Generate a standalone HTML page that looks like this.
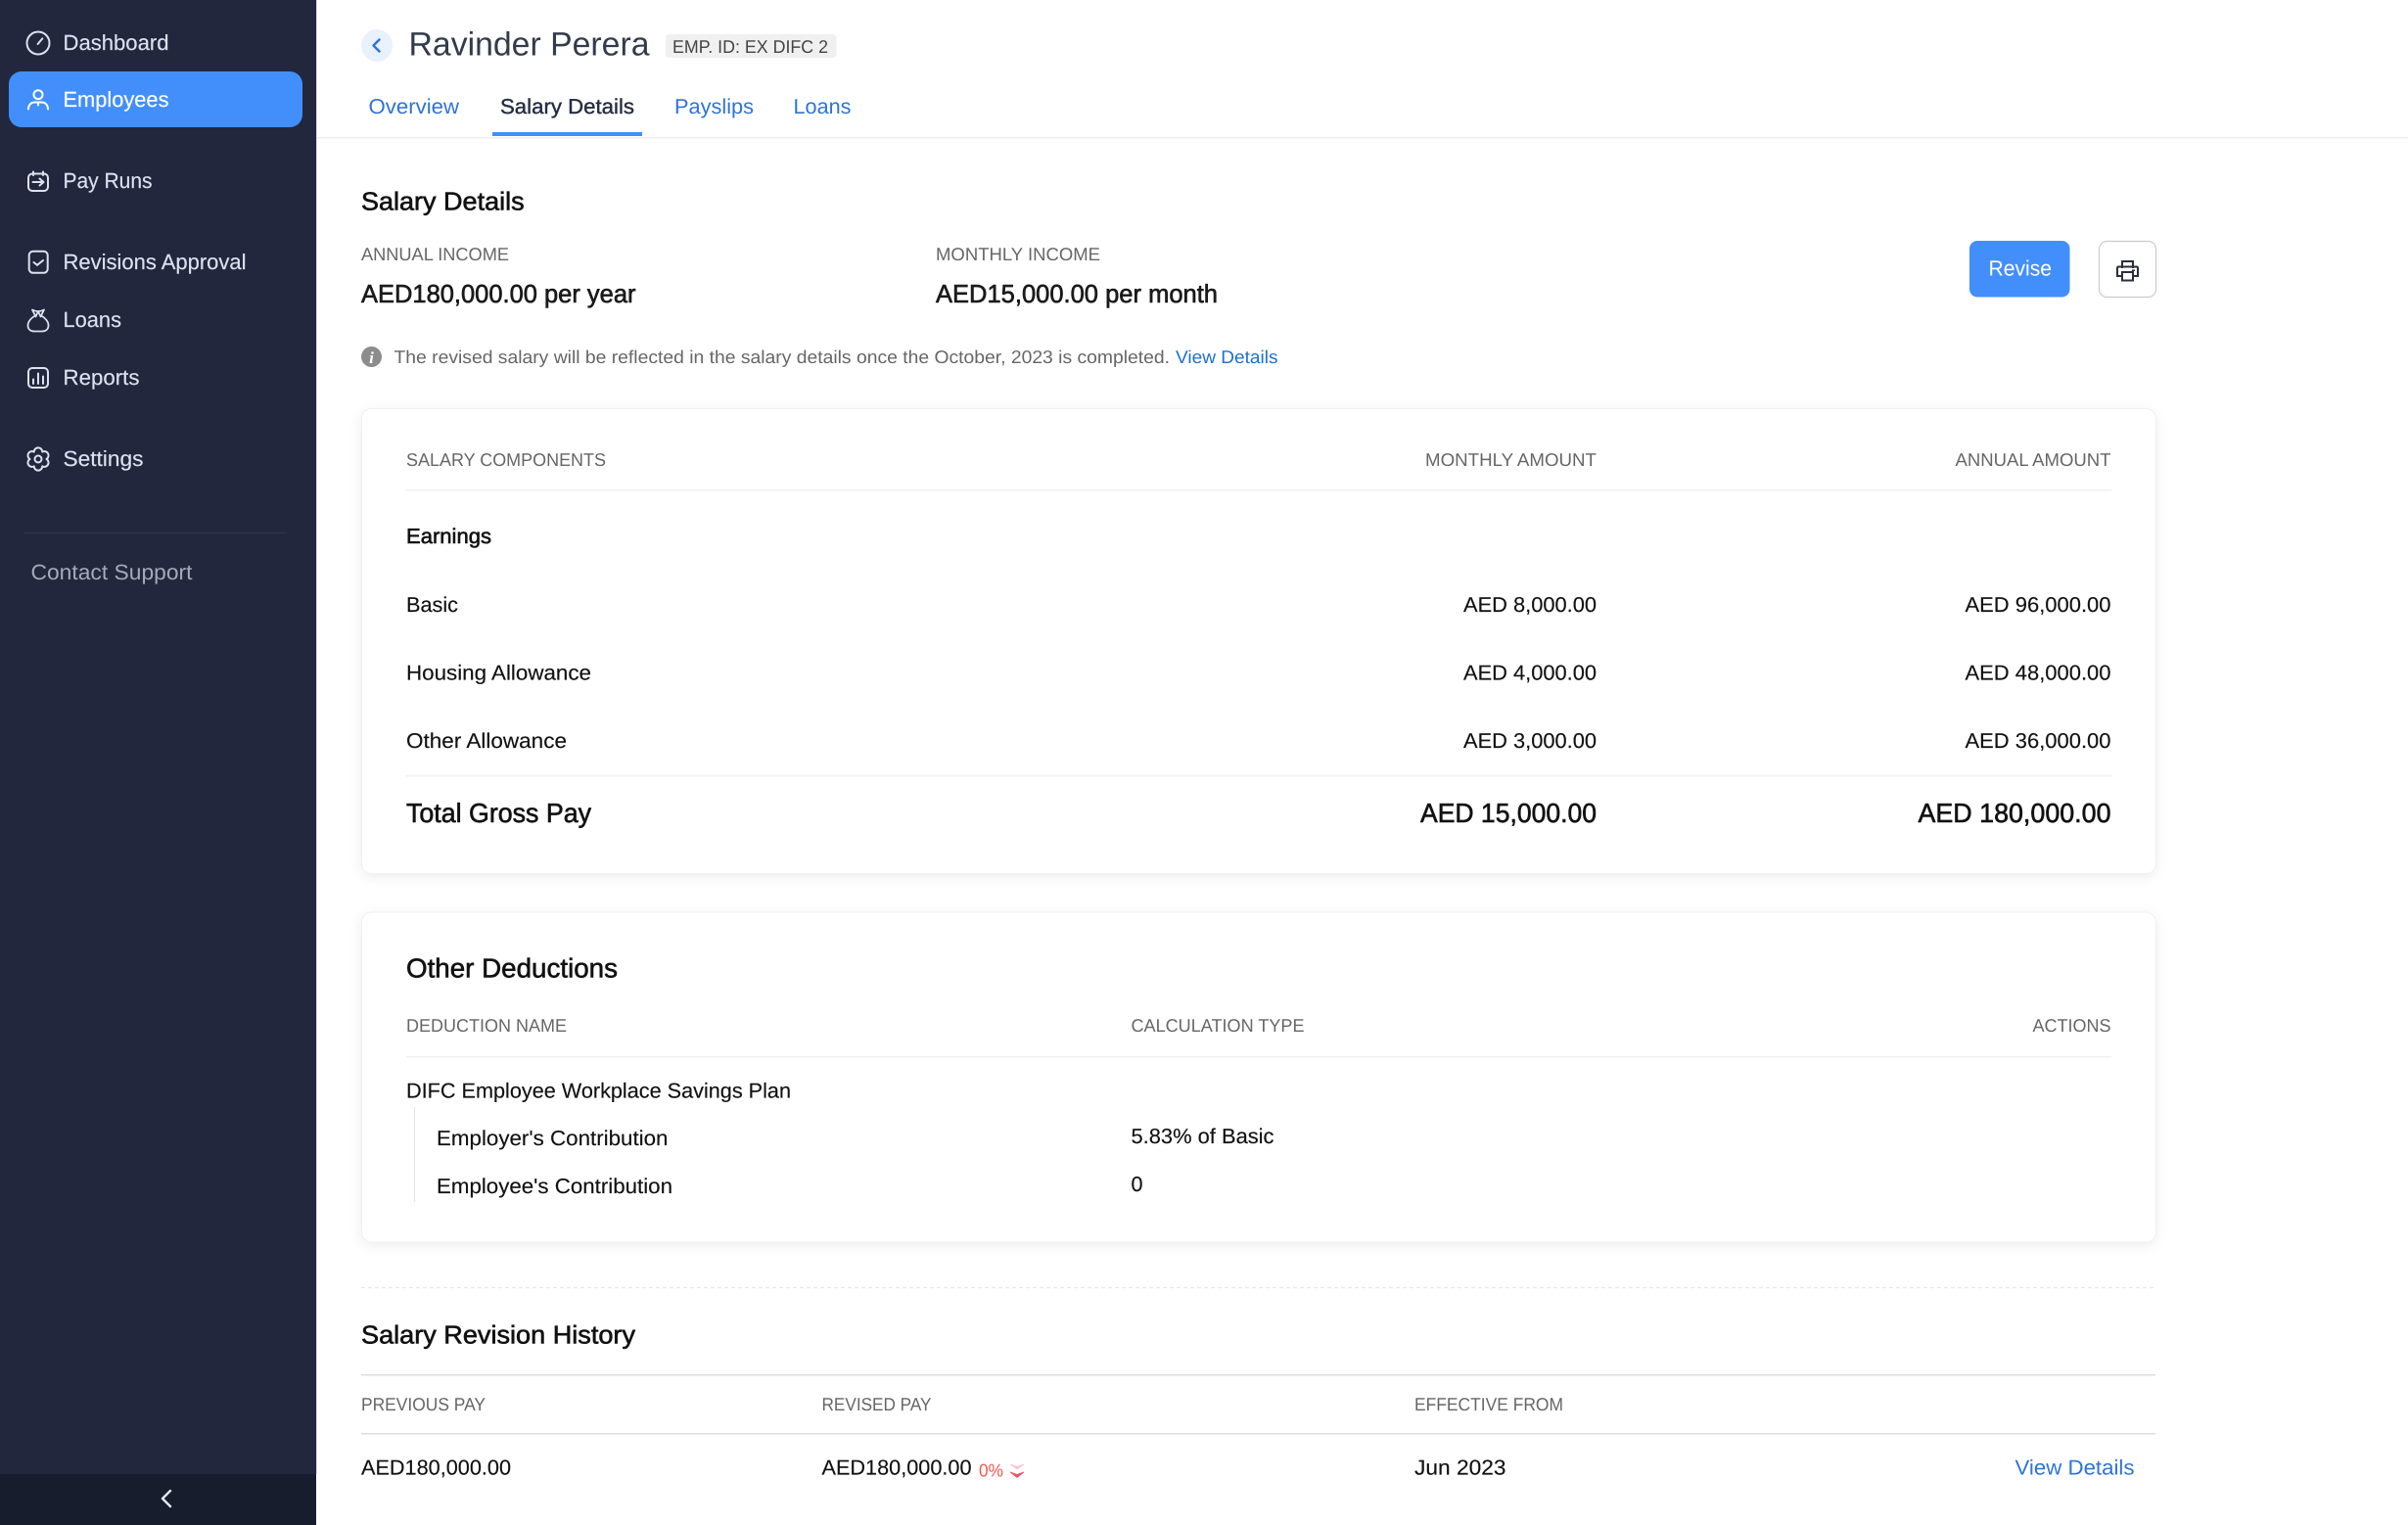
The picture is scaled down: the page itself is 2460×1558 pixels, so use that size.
<!DOCTYPE html>
<html lang="en"><head><meta charset="utf-8"><title>Ravinder Perera - Salary Details</title>
<style>
html,body{margin:0;padding:0;background:#fff;width:2460px;height:1558px;overflow:hidden}
svg{display:block}
text{font-family:"Liberation Sans",Arial,sans-serif;text-rendering:geometricPrecision;white-space:pre}
.n{font-size:22px;fill:#dde1ee;stroke:#dde1ee;stroke-width:.15}
.l{font-size:18.5px;fill:#666}
.b{font-size:21.5px;fill:#111;stroke:#111;stroke-width:.15}
.m{stroke:#111;stroke-width:.6}
.t{font-size:21.5px;fill:#2f74d6}
.e{text-anchor:end}
.ic{fill:none;stroke:#dde1ee;stroke-width:2;stroke-linecap:round;stroke-linejoin:round}
</style></head><body>
<svg xmlns="http://www.w3.org/2000/svg" width="2460" height="1558" viewBox="0 0 2460 1558">
<defs><filter id="s" x="-3%" y="-6%" width="106%" height="114%"><feDropShadow dx="0" dy="3" stdDeviation="6" flood-color="#000" flood-opacity=".07"/></filter></defs>
<rect width="2460" height="1558" fill="#fff"/>

<!-- sidebar -->
<rect x="0" y="0" width="323" height="1558" fill="#22273e"/>
<rect x="323" y="0" width="1" height="1506" fill="#d8d8e4"/>
<rect x="0" y="1506" width="323" height="52" fill="#181d2e"/>
<path d="M174 1523l-8 8 8 8" fill="none" stroke="#e4e8f2" stroke-width="2.4" stroke-linecap="round" stroke-linejoin="round"/>
<rect x="9" y="73" width="300" height="57" rx="13" fill="#428ffc"/>

<g class="ic">
<circle cx="39" cy="44" r="11.5"/><path d="M38.6 45l4.7-5.6"/>
<g stroke="#fff"><circle cx="39" cy="96.7" r="4.5"/><path d="M29 111.5c0-4.5 3-7 6.5-7h7c3.5 0 6.5 2.500 6.500 7M39 104.500v3"/></g>
<rect x="29" y="177.500" width="20" height="17.500" rx="4"/><path d="M34 175.500v3.500M44 175.500v3.500M33.500 186h11M40.500 182.500l4 3.500-4 3.500"/>
<rect x="29.700" y="256.800" width="19" height="22" rx="4"/><path d="M34.500 268l3.500 2.800 6-4.800"/>
<path d="M33 316.500q3 1.500 6 1.500t6-1.500l-3 6c4 2 7.500 6 7.500 10 0 4-3 6-7 6h-7c-4 0-7-2-7-6 0-4 3.500-8 7.500-10zM39 318l-2.500 5.500M39 318l2.500 5.500" stroke-width="1.800"/>
<rect x="29" y="376" width="20" height="20" rx="4"/><path d="M34 387.500v4.500M39 381.500v10.500M44 384.500v7.500"/>
<path d="M47.500 469a4.250 4.250 0 0 1-4.250 7.360a4.250 4.250 0 0 1-8.500 0a4.250 4.250 0 0 1-4.250-7.360a4.250 4.250 0 0 1 4.250-7.360a4.250 4.250 0 0 1 8.500 0a4.250 4.250 0 0 1 4.250 7.360z"/><circle cx="39" cy="469" r="3.500"/>
</g>

<text class="n" x="64.500" y="51" textLength="108" lengthAdjust="spacingAndGlyphs">Dashboard</text>
<text class="n" x="64.500" y="109" textLength="108" lengthAdjust="spacingAndGlyphs" style="fill:#fff;stroke:#fff">Employees</text>
<text class="n" x="64.500" y="192" textLength="91" lengthAdjust="spacingAndGlyphs">Pay Runs</text>
<text class="n" x="64.500" y="275" textLength="187" lengthAdjust="spacingAndGlyphs">Revisions Approval</text>
<text class="n" x="64.500" y="334" textLength="59.500" lengthAdjust="spacingAndGlyphs">Loans</text>
<text class="n" x="64.500" y="393" textLength="78" lengthAdjust="spacingAndGlyphs">Reports</text>
<text class="n" x="64.500" y="476" textLength="82" lengthAdjust="spacingAndGlyphs">Settings</text>
<rect x="24" y="544" width="269" height="1" fill="#2f3650"/>
<text class="n" x="31.500" y="592" textLength="165" lengthAdjust="spacingAndGlyphs" style="fill:#a6aab8;stroke:none">Contact Support</text>

<!-- header -->
<ellipse cx="385" cy="46.500" rx="16" ry="16.500" fill="#e9f1fd"/>
<path d="M387.500 40.500l-6 6 6 6" fill="none" stroke="#2f74d6" stroke-width="2.400" stroke-linecap="round" stroke-linejoin="round"/>
<text x="417.500" y="56.500" font-size="34" fill="#333b4a" textLength="246" lengthAdjust="spacingAndGlyphs">Ravinder Perera</text>
<rect x="680" y="35" width="174.500" height="24" rx="4" fill="#f0f0f0"/>
<text x="687" y="54" font-size="18.500" fill="#444" textLength="159" lengthAdjust="spacingAndGlyphs">EMP. ID: EX DIFC 2</text>
<text class="t" x="376.500" y="115.800" textLength="92.500" lengthAdjust="spacingAndGlyphs">Overview</text>
<text class="t" x="511" y="115.800" textLength="137" lengthAdjust="spacingAndGlyphs" style="fill:#252c40;stroke:#252c40;stroke-width:.4">Salary Details</text>
<text class="t" x="689" y="115.800" textLength="81" lengthAdjust="spacingAndGlyphs">Payslips</text>
<text class="t" x="810.500" y="115.800" textLength="59" lengthAdjust="spacingAndGlyphs">Loans</text>
<rect x="324" y="140" width="2136" height="1.500" fill="#eceef0"/>
<rect x="503" y="135" width="153" height="4" fill="#428ffc"/>

<!-- summary -->
<text class="m" x="369" y="214.500" font-size="26" fill="#111" textLength="166.600" lengthAdjust="spacingAndGlyphs">Salary Details</text>
<text class="l" x="369" y="266" textLength="151" lengthAdjust="spacingAndGlyphs">ANNUAL INCOME</text>
<text class="l" x="956" y="266" textLength="168" lengthAdjust="spacingAndGlyphs">MONTHLY INCOME</text>
<text class="m" x="369" y="309" font-size="26" fill="#1c1c1c" textLength="280.500" lengthAdjust="spacingAndGlyphs">AED180,000.00 per year</text>
<text class="m" x="956" y="309" font-size="26" fill="#1c1c1c" textLength="288" lengthAdjust="spacingAndGlyphs">AED15,000.00 per month</text>
<circle cx="379.500" cy="364.500" r="10.500" fill="#8c8c8c"/>
<text x="379.500" y="371" font-size="17" font-style="italic" font-weight="700" fill="#fff" text-anchor="middle" style="font-family:'Liberation Serif',serif">i</text>
<text x="402.500" y="371" font-size="18.500" fill="#666" textLength="792.500" lengthAdjust="spacingAndGlyphs">The revised salary will be reflected in the salary details once the October, 2023 is completed.</text>
<text x="1201" y="371" font-size="18.500" fill="#1e6fd0" textLength="104.500" lengthAdjust="spacingAndGlyphs">View Details</text>
<rect x="2012" y="246" width="102.500" height="57.500" rx="8" fill="#428ffc"/>
<text x="2031.500" y="281.500" font-size="22" fill="#fff" textLength="64.500" lengthAdjust="spacingAndGlyphs">Revise</text>
<rect x="2144.500" y="246.500" width="58" height="57" rx="8" fill="#fff" stroke="#ccc" stroke-width="1.200"/>
<g fill="none" stroke="#2b2f38" stroke-width="2">
<path d="M2168 274v-7h11v7"/>
<path d="M2168 282h-5v-8q0-1.500 1.500-1.500h18q1.500 0 1.500 1.500v8h-5"/>
<rect x="2168" y="278" width="11" height="8.500"/>
</g>
<rect x="2178" y="275.500" width="3" height="1.500" fill="#2b2f38"/>

<!-- card 1 -->
<rect x="369.500" y="417.500" width="1833" height="475" rx="10" fill="#fff" stroke="#f0f0f0" filter="url(#s)"/>
<text class="l" x="415" y="476" textLength="204" lengthAdjust="spacingAndGlyphs">SALARY COMPONENTS</text>
<text class="l e" x="1631" y="476" textLength="175" lengthAdjust="spacingAndGlyphs">MONTHLY AMOUNT</text>
<text class="l e" x="2156.500" y="476" textLength="159" lengthAdjust="spacingAndGlyphs">ANNUAL AMOUNT</text>
<rect x="415" y="500" width="1742" height="1.500" fill="#f0f0f0"/>
<text class="b m" x="415" y="555" textLength="87" lengthAdjust="spacingAndGlyphs" style="stroke-width:.6">Earnings</text>
<text class="b" x="415" y="625" textLength="53" lengthAdjust="spacingAndGlyphs">Basic</text>
<text class="b e" x="1631" y="625" textLength="136" lengthAdjust="spacingAndGlyphs">AED 8,000.00</text>
<text class="b e" x="2156.500" y="625" textLength="149" lengthAdjust="spacingAndGlyphs">AED 96,000.00</text>
<text class="b" x="415" y="694.500" textLength="189" lengthAdjust="spacingAndGlyphs">Housing Allowance</text>
<text class="b e" x="1631" y="694.500" textLength="136" lengthAdjust="spacingAndGlyphs">AED 4,000.00</text>
<text class="b e" x="2156.500" y="694.500" textLength="149" lengthAdjust="spacingAndGlyphs">AED 48,000.00</text>
<text class="b" x="415" y="764" textLength="164" lengthAdjust="spacingAndGlyphs">Other Allowance</text>
<text class="b e" x="1631" y="764" textLength="136" lengthAdjust="spacingAndGlyphs">AED 3,000.00</text>
<text class="b e" x="2156.500" y="764" textLength="149" lengthAdjust="spacingAndGlyphs">AED 36,000.00</text>
<rect x="415" y="792" width="1742" height="1.500" fill="#f0f0f0"/>
<text class="m" x="415" y="840" font-size="27.500" fill="#111" textLength="189" lengthAdjust="spacingAndGlyphs">Total Gross Pay</text>
<text class="m e" x="1631" y="840" font-size="27.500" fill="#111" textLength="180" lengthAdjust="spacingAndGlyphs">AED 15,000.00</text>
<text class="m e" x="2156.500" y="840" font-size="27.500" fill="#111" textLength="197" lengthAdjust="spacingAndGlyphs">AED 180,000.00</text>

<!-- card 2 -->
<rect x="369.500" y="932" width="1833" height="337" rx="10" fill="#fff" stroke="#f0f0f0" filter="url(#s)"/>
<text class="m" x="415" y="998.500" font-size="27.500" fill="#111" textLength="216" lengthAdjust="spacingAndGlyphs">Other Deductions</text>
<text class="l" x="415" y="1054" textLength="164" lengthAdjust="spacingAndGlyphs">DEDUCTION NAME</text>
<text class="l" x="1155.500" y="1054" textLength="177" lengthAdjust="spacingAndGlyphs">CALCULATION TYPE</text>
<text class="l e" x="2156.500" y="1054" textLength="80" lengthAdjust="spacingAndGlyphs">ACTIONS</text>
<rect x="415" y="1079" width="1742" height="1.500" fill="#f0f0f0"/>
<text class="b" x="415" y="1121.500" textLength="393" lengthAdjust="spacingAndGlyphs">DIFC Employee Workplace Savings Plan</text>
<rect x="423" y="1131" width="1" height="97" fill="#e6e6e6"/>
<text class="b" x="446" y="1170" textLength="236.500" lengthAdjust="spacingAndGlyphs">Employer's Contribution</text>
<text class="b" x="446" y="1219" textLength="241" lengthAdjust="spacingAndGlyphs">Employee's Contribution</text>
<text class="b" x="1155.500" y="1168" textLength="146" lengthAdjust="spacingAndGlyphs">5.83% of Basic</text>
<text class="b" x="1155.500" y="1217" textLength="12" lengthAdjust="spacingAndGlyphs">0</text>

<!-- history -->
<line x1="369" y1="1315.500" x2="2202" y2="1315.500" stroke="#e8e8e8" stroke-width="1.200" stroke-dasharray="4 3"/>
<text class="m" x="369" y="1372.500" font-size="26" fill="#111" textLength="280" lengthAdjust="spacingAndGlyphs">Salary Revision History</text>
<rect x="369" y="1404" width="1833" height="1.500" fill="#dedede"/>
<text class="l" x="369" y="1441" textLength="127" lengthAdjust="spacingAndGlyphs">PREVIOUS PAY</text>
<text class="l" x="839.500" y="1441" textLength="112" lengthAdjust="spacingAndGlyphs">REVISED PAY</text>
<text class="l" x="1445" y="1441" textLength="152" lengthAdjust="spacingAndGlyphs">EFFECTIVE FROM</text>
<rect x="369" y="1464" width="1833" height="1.500" fill="#dedede"/>
<text class="b" x="369" y="1506.500" textLength="153" lengthAdjust="spacingAndGlyphs">AED180,000.00</text>
<text class="b" x="839.500" y="1506.500" textLength="153" lengthAdjust="spacingAndGlyphs">AED180,000.00</text>
<text x="1000" y="1508.500" font-size="18.500" fill="#f9574f" textLength="25" lengthAdjust="spacingAndGlyphs">0%</text>
<path d="M1032 1495.500l7 2.500 7-2.500v1l-7 4.800-7-4.800z" fill="#f9c6c8"/>
<path d="M1032 1503.500l7 2.500 7-2.500v1l-7 5.500-7-5.500z" fill="#e8566a"/>
<text class="b" x="1445" y="1506.500" textLength="93.500" lengthAdjust="spacingAndGlyphs">Jun 2023</text>
<text class="t e" x="2180.500" y="1506.500" textLength="122" lengthAdjust="spacingAndGlyphs">View Details</text>
</svg>
</body></html>
